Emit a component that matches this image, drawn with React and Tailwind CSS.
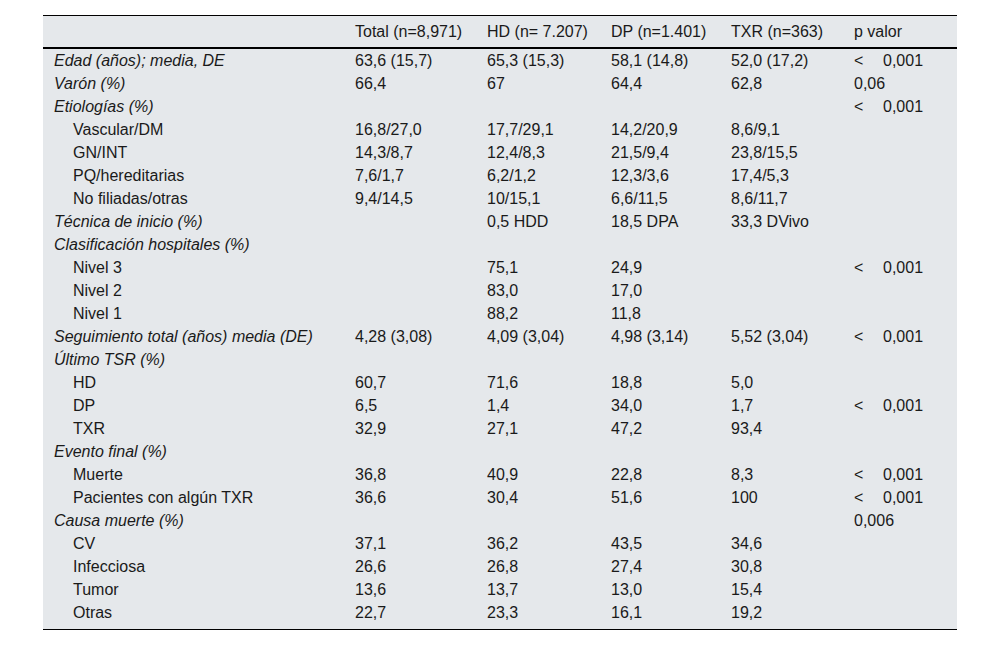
const rows = [
  { label: "Edad (años); media, DE", head: true, v: ["63,6 (15,7)", "65,3 (15,3)", "58,1 (14,8)", "52,0 (17,2)"], p: "<0,001" },
  { label: "Varón (%)", head: true, v: ["66,4", "67", "64,4", "62,8"], p: "0,06" },
  { label: "Etiologías (%)", head: true, v: [], p: "<0,001" },
  { label: "Vascular/DM", v: ["16,8/27,0", "17,7/29,1", "14,2/20,9", "8,6/9,1"] },
  { label: "GN/INT", v: ["14,3/8,7", "12,4/8,3", "21,5/9,4", "23,8/15,5"] },
  { label: "PQ/hereditarias", v: ["7,6/1,7", "6,2/1,2", "12,3/3,6", "17,4/5,3"] },
  { label: "No filiadas/otras", v: ["9,4/14,5", "10/15,1", "6,6/11,5", "8,6/11,7"] },
  { label: "Técnica de inicio (%)", head: true, v: ["", "0,5 HDD", "18,5 DPA", "33,3 DVivo"] },
  { label: "Clasificación hospitales (%)", head: true, v: [] },
  { label: "Nivel 3", v: ["", "75,1", "24,9", ""], p: "<0,001" },
  { label: "Nivel 2", v: ["", "83,0", "17,0", ""] },
  { label: "Nivel 1", v: ["", "88,2", "11,8", ""] },
  { label: "Seguimiento total (años) media (DE)", head: true, v: ["4,28 (3,08)", "4,09 (3,04)", "4,98 (3,14)", "5,52 (3,04)"], p: "<0,001" },
  { label: "Último TSR (%)", head: true, v: [] },
  { label: "HD", v: ["60,7", "71,6", "18,8", "5,0"] },
  { label: "DP", v: ["6,5", "1,4", "34,0", "1,7"], p: "<0,001" },
  { label: "TXR", v: ["32,9", "27,1", "47,2", "93,4"] },
  { label: "Evento final (%)", head: true, v: [] },
  { label: "Muerte", v: ["36,8", "40,9", "22,8", "8,3"], p: "<0,001" },
  { label: "Pacientes con algún TXR", v: ["36,6", "30,4", "51,6", "100"], p: "<0,001" },
  { label: "Causa muerte (%)", head: true, v: [], p: "0,006" },
  { label: "CV", v: ["37,1", "36,2", "43,5", "34,6"] },
  { label: "Infecciosa", v: ["26,6", "26,8", "27,4", "30,8"] },
  { label: "Tumor", v: ["13,6", "13,7", "13,0", "15,4"] },
  { label: "Otras", v: ["22,7", "23,3", "16,1", "19,2"] },
];

const cols = "grid grid-cols-[300px_132px_124px_120px_123px_1fr]";

function PValue({ p }) {
  if (!p) return null;
  if (p.startsWith("<")) {
    return (
      <span className="flex">
        <span className="w-[29px]">&lt;</span>
        <span>{p.slice(1)}</span>
      </span>
    );
  }
  return <span>{p}</span>;
}

export default function App() {
  return (
    <div className="bg-white min-h-[645px] pt-[15px]" style={{ fontFamily: '"Liberation Sans", Arial, sans-serif' }}>
      <div className="mx-auto w-[914px] bg-[#e5e8eb] border-t border-black border-b text-[16px] text-[#1a1a1a] pb-[5px]">
        <div className={`${cols} h-[33px] items-center border-b-2 border-black`}>
          <div />
          <div className="pl-3">Total (n=8,971)</div>
          <div className="pl-3">HD (n= 7.207)</div>
          <div className="pl-3">DP (n=1.401)</div>
          <div className="pl-3">TXR (n=363)</div>
          <div className="pl-3">p valor</div>
        </div>
        {rows.map((r, i) => (
          <div key={i} className={`${cols} h-[23px] items-center leading-[23px]`}>
            <div className={r.head ? "pl-[11px] italic" : "pl-[30px]"}>{r.label}</div>
            {[0, 1, 2, 3].map((j) => (
              <div key={j} className="pl-3">{r.v[j] || ""}</div>
            ))}
            <div className="pl-3">
              <PValue p={r.p} />
            </div>
          </div>
        ))}
      </div>
    </div>
  );
}
